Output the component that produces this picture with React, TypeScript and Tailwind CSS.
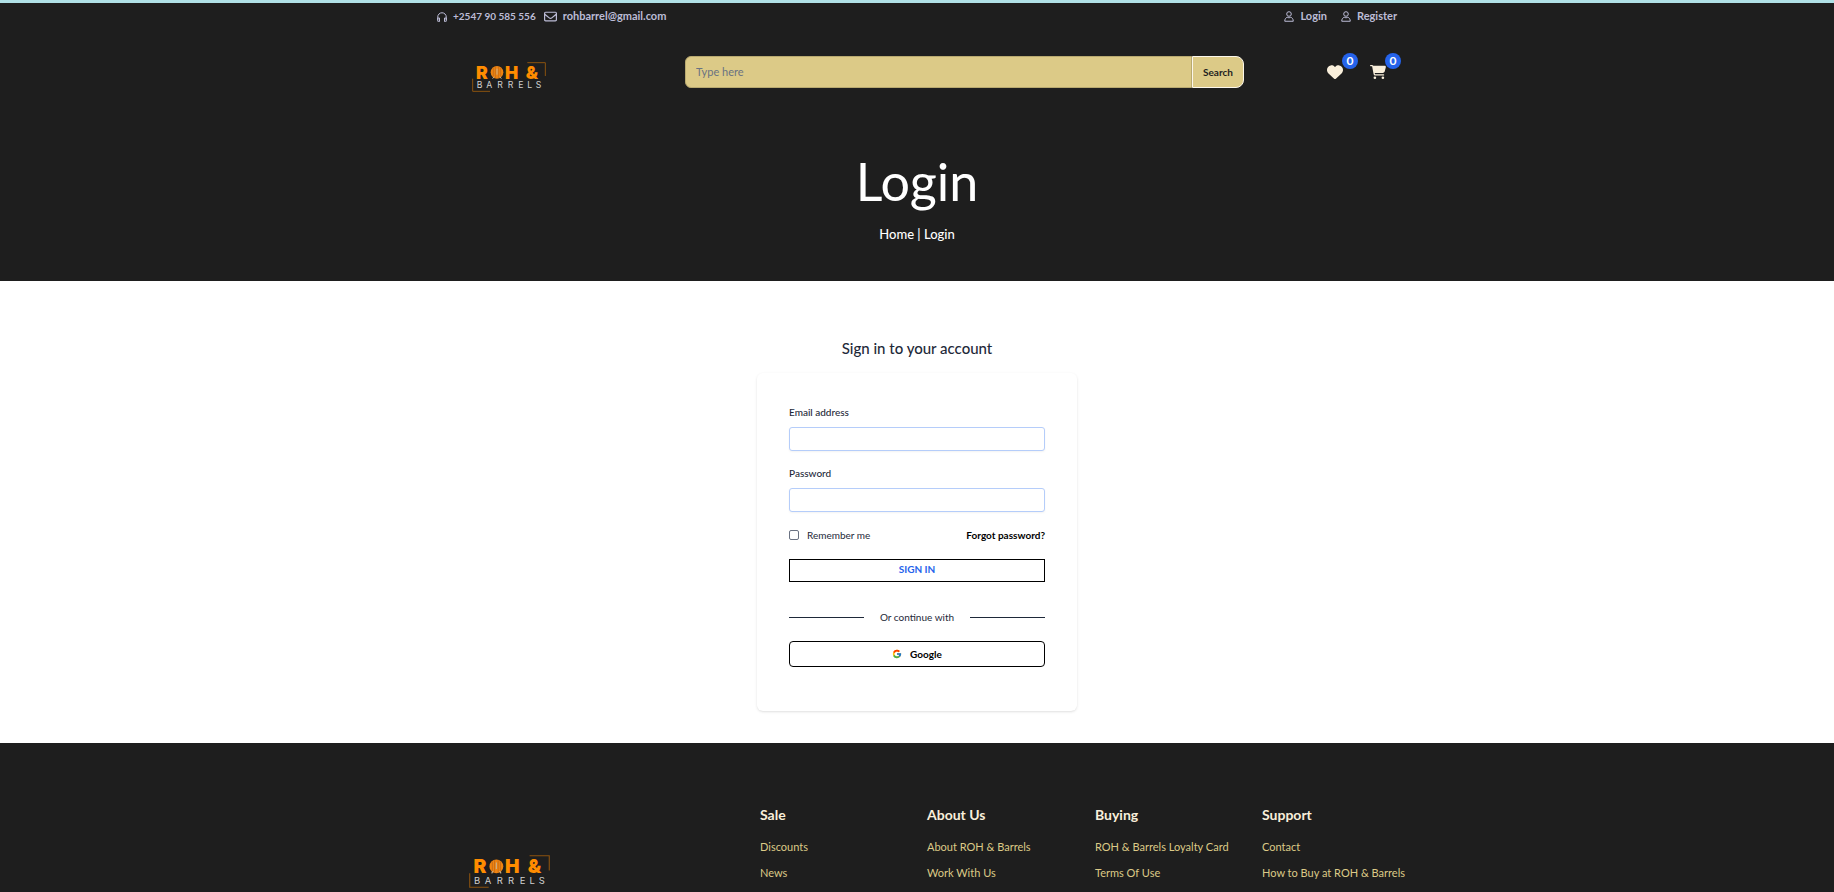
import type { ReactNode } from "react";
import { FaHeart, FaCartShopping, FaRegEnvelope } from "react-icons/fa6";
import { FcGoogle } from "react-icons/fc";

function Logo({ className }: { className: string }) {
  return (
    <svg viewBox="0 0 222 90" className={className} role="img" aria-label="ROH & Barrels">
      <path d="M166 2H220V42M2 50V88H54" fill="none" stroke="#8a520f" strokeWidth="3" />
      <g fill="#ff8c00" fontFamily="Inter, sans-serif" fontWeight="900" fontSize="53">
        <text x="12 99 161" y="50">RH&amp;</text>
      </g>
      <circle cx="75" cy="31" r="19" fill="#f08410" />
      <path d="M64 18V44M70 14V48M80 14V48M86 18V44" stroke="#b9661a" strokeWidth="2" />
      <path d="M75 20V38M62 50L66 44M88 50L84 44" stroke="#c9b08c" strokeWidth="3" />
      <text x="14 43 76 107 139 166 191" y="79" fill="#d0d0d0" fontFamily="Inter, sans-serif" fontSize="26">
        BARRELS
      </text>
    </svg>
  );
}

function HeadphonesIcon() {
  return (
    <svg viewBox="0 0 20 20" className="size-2.5" fill="none" stroke="currentColor" strokeWidth="2" aria-hidden="true">
      <path d="M1.5 17V10a8.5 8.5 0 0 1 17 0v7" />
      <path d="M1.5 12H5v7H3a1.5 1.5 0 0 1-1.5-2ZM18.5 12H15v7h2a1.5 1.5 0 0 0 1.5-2Z" />
    </svg>
  );
}

function UserIcon() {
  return (
    <svg viewBox="0 0 20 22" className="h-[11px] w-2.5" fill="none" stroke="currentColor" strokeWidth="2" aria-hidden="true">
      <circle cx="10" cy="6" r="4.6" />
      <path d="M6.5 12.5C3.5 13.5 1.5 16 1.5 20.5h17c0-4.5-2-7-5-8-2 1.3-5 1.3-7 0Z" strokeLinejoin="round" />
    </svg>
  );
}

const columns = [
  { title: "Sale", links: ["Discounts", "News"] },
  { title: "About Us", links: ["About ROH & Barrels", "Work With Us"] },
  { title: "Buying", links: ["ROH & Barrels Loyalty Card", "Terms Of Use"] },
  { title: "Support", links: ["Contact", "How to Buy at ROH & Barrels"] },
];

function TopLink({ href, icon, children }: { href: string; icon: ReactNode; children: ReactNode }) {
  return (
    <a href={href} className="flex items-center gap-1.5">
      {icon}
      {children}
    </a>
  );
}

function CountLink({ label, icon }: { label: string; icon: ReactNode }) {
  return (
    <a href="#" aria-label={label} className="relative block text-[#f9efdb]">
      {icon}
      <span className="absolute -top-[11px] left-[15px] flex size-4 items-center justify-center rounded-full bg-[#2563eb] text-xs font-bold text-white">
        0
      </span>
    </a>
  );
}

function Field({ id, label, type }: { id: string; label: string; type: string }) {
  return (
    <div>
      <label htmlFor={id} className="block text-[10px] leading-[14px] font-medium text-gray-800">
        {label}
      </label>
      <input
        id={id}
        type={type}
        className="mt-2 block h-6 w-full rounded-[3px] border border-[#b5cdfa] bg-white px-2 text-xs shadow-xs"
      />
    </div>
  );
}

export default function App() {
  return (
    <div className="flex min-h-screen flex-col bg-white font-['Lato',sans-serif] text-gray-800">
      <header className="border-t-3 border-[#b0e0e6] bg-[#1e1e1e]">
        <div className="mx-auto max-w-[960px]">
          <div className="flex h-[27px] items-center justify-between text-[11px] font-bold text-[#bcbcd6]">
            <div className="flex gap-2">
              <TopLink href="tel:+254790585556" icon={<HeadphonesIcon />}>
                <span className="text-[10px]">+2547 90 585 556</span>
              </TopLink>
              <TopLink href="mailto:rohbarrel@gmail.com" icon={<FaRegEnvelope className="size-[13px]" />}>
                rohbarrel@gmail.com
              </TopLink>
            </div>
            <nav className="flex gap-3.5">
              <TopLink href="#login" icon={<UserIcon />}>
                Login
              </TopLink>
              <TopLink href="#register" icon={<UserIcon />}>
                Register
              </TopLink>
            </nav>
          </div>
          <div className="flex h-[84px] items-center">
            <a href="#" className="ml-[35px]">
              <Logo className="mt-2.5 h-[30px] w-[74px]" />
            </a>
            <form className="ml-[139px] flex h-8 w-[559px]" onSubmit={(e) => e.preventDefault()}>
              <input
                type="search"
                aria-label="Search products"
                placeholder="Type here"
                className="min-w-0 flex-1 rounded-l-md border border-[#b8a970] bg-[#dcca87] px-2.5 text-[11px] placeholder:text-gray-500"
              />
              <button className="w-[52px] rounded-r-lg border border-[#fbf6ea] bg-[#dcca87] text-[10px] font-bold text-[#1e1e1e]">
                Search
              </button>
            </form>
            <div className="mr-[11px] ml-auto flex gap-[27px]">
              <CountLink label="Wishlist" icon={<FaHeart className="size-4" />} />
              <CountLink label="Cart" icon={<FaCartShopping className="size-4" />} />
            </div>
          </div>
        </div>
        <div className="flex flex-col items-center pt-9 pb-10 text-white">
          <h1 className="text-[52px] leading-[62px]">Login</h1>
          <p className="mt-[15px] text-[13px] leading-[14px] font-medium">
            <a href="#">Home</a> | <a href="#login">Login</a>
          </p>
        </div>
      </header>

      <main className="flex flex-col items-center px-4 pt-[55px] pb-8">
        <h2 className="text-[15px] leading-6 font-medium">Sign in to your account</h2>
        <form
          className="mt-[13px] w-full max-w-80 rounded-md px-8 pt-8 pb-11 shadow-sm"
          onSubmit={(e) => e.preventDefault()}
        >
          <div className="space-y-[15px]">
            <Field id="email" label="Email address" type="email" />
            <Field id="password" label="Password" type="password" />
          </div>
          <div className="mt-[15px] flex h-4 items-center justify-between text-[10px]">
            <label className="flex items-center gap-2 text-gray-800">
              <input type="checkbox" className="size-2.5 appearance-none rounded-xs border border-gray-500 bg-white" />
              Remember me
            </label>
            <a href="#forgot" className="font-bold text-black">
              Forgot password?
            </a>
          </div>
          <button className="mt-4 block h-[23px] w-full border border-black pb-0.5 text-[10px] font-bold text-[#2563eb]">
            SIGN IN
          </button>
          <div className="mt-[27px] flex h-4 items-center gap-4 text-[10px] text-gray-800">
            <span className="h-px flex-1 bg-gray-800" />
            Or continue with
            <span className="h-px flex-1 bg-gray-800" />
          </div>
          <button
            type="button"
            className="mt-4 flex h-[26px] w-full items-center justify-center gap-2 rounded-[4px] border border-black text-[10px] font-bold text-black"
          >
            <FcGoogle className="size-2.5" />
            Google
          </button>
        </form>
      </main>

      <footer className="flex-1 bg-[#1e1e1e]">
        <div className="mx-auto flex max-w-[960px] pt-16">
          <a href="#" className="mt-12 ml-8 block w-[291px] shrink-0">
            <Logo className="h-[33px] w-[81px]" />
          </a>
          <div className="grid min-w-0 flex-1 grid-cols-[167px_168px_167px_1fr]">
            {columns.map((column) => (
              <section key={column.title}>
                <h3 className="text-sm leading-4 font-bold text-[#f9efdb]">{column.title}</h3>
                <ul className="mt-[11px] text-[11px] leading-[26px] whitespace-nowrap text-[#dcca87]">
                  {column.links.map((link) => (
                    <li key={link}>
                      <a href="#">{link}</a>
                    </li>
                  ))}
                </ul>
              </section>
            ))}
          </div>
        </div>
      </footer>
    </div>
  );
}
